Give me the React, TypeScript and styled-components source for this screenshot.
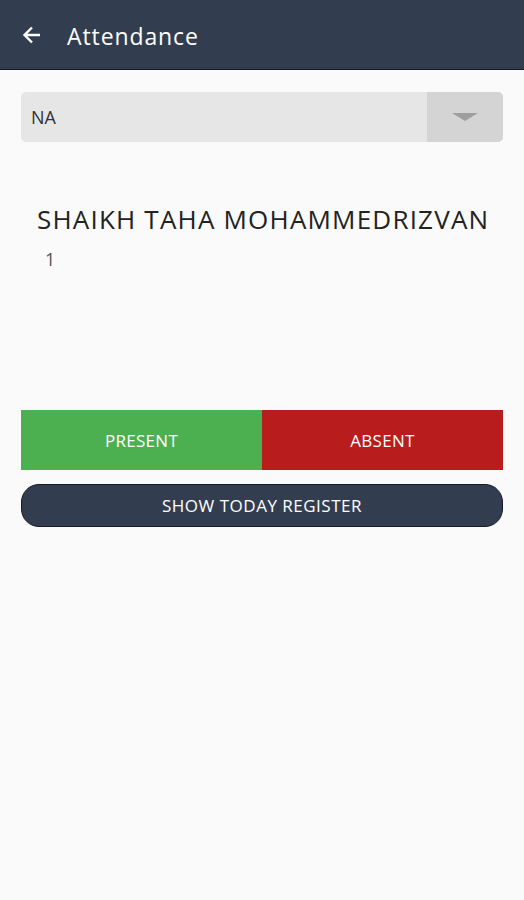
import React from "react";
import styled, { createGlobalStyle } from "styled-components";

const GlobalStyle = createGlobalStyle`
  html, body {
    margin: 0;
    padding: 0;
    background: #fafafa;
    font-family: "Open Sans", "Noto Sans", sans-serif;
  }
`;

const Page = styled.div`
  width: 524px;
  min-height: 900px;
  background: #fafafa;
`;

const Toolbar = styled.header`
  height: 69px;
  background: #323e50;
  border-bottom: 1px solid #141a28;
  display: flex;
  align-items: center;
  padding: 0 0 0 20px;
  color: #fff;

  h1 {
    margin: 2px 0 0 23px;
    font-size: 23px;
    font-weight: 400;
    letter-spacing: 0.9px;
  }
`;

const BackButton = styled.button`
  background: none;
  border: 0;
  padding: 0;
  display: flex;
  color: #fff;
`;

const Content = styled.main`
  padding: 22px 21px 0;
`;

const Select = styled.div`
  height: 50px;
  display: flex;
  border-radius: 5px;
  overflow: hidden;
  background: #e6e6e6;

  .value {
    flex: 1;
    display: flex;
    align-items: center;
    padding-left: 10px;
    font-size: 18px;
    color: #333;
  }

  .caret {
    width: 76px;
    background: #d4d4d4;
    display: flex;
    align-items: center;
    justify-content: center;
  }
`;

const Student = styled.section`
  padding: 59px 0 0 16px;
  height: 268px;
  box-sizing: border-box;

  h2 {
    margin: 0;
    font-size: 26px;
    font-weight: 400;
    color: #222;
    letter-spacing: 1.2px;
  }

  p {
    margin: 10px 0 0 8px;
    font-size: 18px;
    color: #555;
  }
`;

const Actions = styled.div`
  display: grid;
  grid-template-columns: 1fr 1fr;
  height: 60px;
`;

const MarkButton = styled.button<{ $tone: "present" | "absent" }>`
  border: 0;
  margin: 0;
  font-family: inherit;
  font-size: 17px;
  letter-spacing: 0.3px;
  color: #fff;
  background: ${(p) => (p.$tone === "present" ? "#4caf50" : "#b81c1c")};
`;

const RegisterButton = styled.button`
  margin-top: 14px;
  width: 100%;
  height: 43px;
  border-radius: 18px;
  border: 1px solid #141a28;
  background: #323e50;
  color: #fff;
  font-family: inherit;
  font-size: 17px;
  letter-spacing: 0.5px;
`;

export default function App() {
  return (
    <Page>
      <GlobalStyle />
      <Toolbar>
        <BackButton aria-label="Back">
          <svg width="24" height="24" viewBox="0 0 24 24">
            <path
              d="M20 12H5M12 4.5L4.5 12l7.5 7.5"
              fill="none"
              stroke="#fff"
              strokeWidth="2.4"
            />
          </svg>
        </BackButton>
        <h1>Attendance</h1>
      </Toolbar>
      <Content>
        <Select>
          <div className="value">NA</div>
          <div className="caret">
            <svg width="28" height="10" viewBox="0 0 28 10">
              <path d="M1 1h26L14 9z" fill="#9e9e9e" />
            </svg>
          </div>
        </Select>
        <Student>
          <h2>SHAIKH TAHA MOHAMMEDRIZVAN</h2>
          <p>1</p>
        </Student>
        <Actions>
          <MarkButton $tone="present">PRESENT</MarkButton>
          <MarkButton $tone="absent">ABSENT</MarkButton>
        </Actions>
        <RegisterButton>SHOW TODAY REGISTER</RegisterButton>
      </Content>
    </Page>
  );
}
